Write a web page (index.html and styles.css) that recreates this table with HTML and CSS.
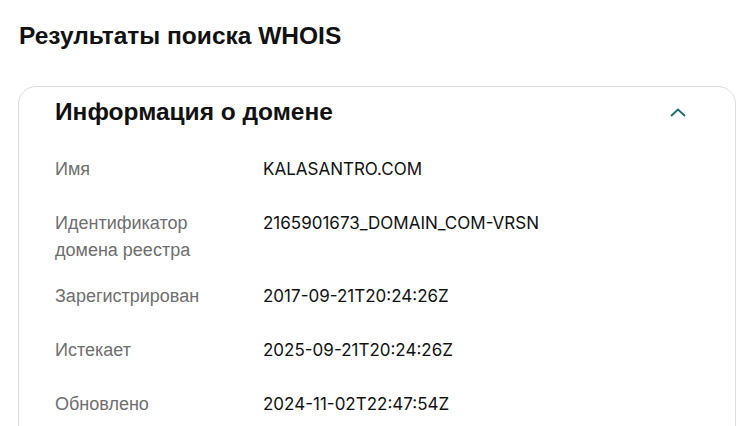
FILE: index.html
```html
<!DOCTYPE html>
<html lang="ru">

<head>
    <meta charset="UTF-8">
    <meta name="viewport" content="width=device-width, initial-scale=1.0">
    <link rel="stylesheet" href="styles.css">
    <title>Результаты поиска WHOIS</title>
</head>

<body>

    <div class="page">
        <h1 class="page-title">Результаты поиска WHOIS</h1>

        <div class="card">
            <div class="card-header">
                <h2 class="card-title">Информация о домене</h2>
                <button class="toggle" title="Свернуть">
                    <svg width="16" height="9" viewBox="0 0 16 9">
                        <path d="M1 8 L8 1.5 L15 8" fill="none" stroke="#1b6e6f" stroke-width="1.8"/>
                    </svg>
                </button>
            </div>

            <div class="info">
                <div class="row">
                    <div class="label">Имя</div>
                    <div class="value">KALASANTRO.COM</div>
                </div>
                <div class="row">
                    <div class="label">Идентификатор домена реестра</div>
                    <div class="value">2165901673_DOMAIN_COM-VRSN</div>
                </div>
                <div class="row">
                    <div class="label">Зарегистрирован</div>
                    <div class="value">2017-09-21T20:24:26Z</div>
                </div>
                <div class="row">
                    <div class="label">Истекает</div>
                    <div class="value">2025-09-21T20:24:26Z</div>
                </div>
                <div class="row">
                    <div class="label">Обновлено</div>
                    <div class="value">2024-11-02T22:47:54Z</div>
                </div>
            </div>
        </div>
    </div>

</body>

</html>
```

FILE: styles.css
```css
body {
    font-family: 'Liberation Sans', Arial, sans-serif;
    background: #ffffff;
    color: #111111;
    margin: 0;
    padding: 0;
}

.page {
    padding: 20px 0 0 18px;
}

.page-title {
    font-size: 24.5px;
    font-weight: bold;
    line-height: 32px;
    margin: 0 0 34px 1px;
}

.card {
    border: 1px solid #dddddd;
    border-radius: 18px;
    padding: 10px 49px 40px 36px;
}

.card-header {
    display: flex;
    justify-content: space-between;
    align-items: center;
    height: 30px;
    margin-bottom: 27px;
}

.card-title {
    font-size: 24.5px;
    font-weight: bold;
    line-height: 30px;
    margin: 0;
}

.toggle {
    background: none;
    border: none;
    padding: 0;
    width: 16px;
    height: 16px;
    cursor: pointer;
    display: flex;
    align-items: center;
    justify-content: center;
}

.info {
    display: flex;
    flex-direction: column;
    gap: 24px;
}

.row {
    display: flex;
    align-items: flex-start;
}

.label {
    width: 160px;
    margin-right: 48px;
    padding-top: 2px;
    margin-bottom: -7px;
    color: #6e6e6e;
    font-size: 18px;
    line-height: 27px;
}

.value {
    font-family: 'Inter', sans-serif;
    font-size: 17px;
    line-height: 30px;
    color: #111111;
}
```
